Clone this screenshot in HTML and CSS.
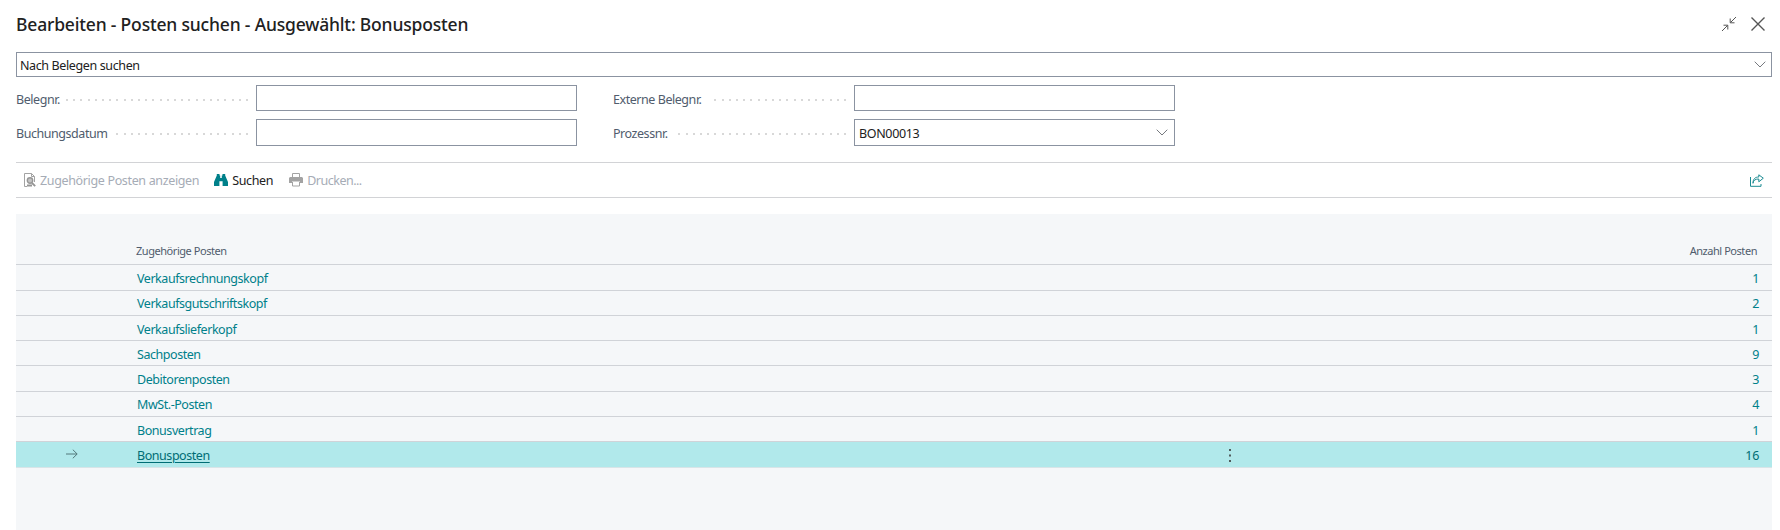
FILE: index.html
```
<!DOCTYPE html>
<html lang="de">
<head>
<meta charset="utf-8">
<title>Posten suchen</title>
<link rel="stylesheet" href="styles.css">
</head>
<body>
<main class="page">
  <header class="titlebar">
    <h1 class="title">Bearbeiten - Posten suchen - Ausgewählt: Bonusposten</h1>
    <svg class="icon-collapse" width="16" height="16" viewBox="0 0 16 16"><path d="M1 15 6.5 9.5M2.5 9.2H6.8V13.5M15 1 9.5 6.5M9.2 2.5V6.8H13.5"/></svg>
    <svg class="icon-close" width="16" height="16" viewBox="0 0 16 16"><path d="M1.5 1.5 14.5 14.5M14.5 1.5 1.5 14.5"/></svg>
  </header>

  <div class="combo">
    <span class="combo-text">Nach Belegen suchen</span>
    <svg class="chevron" width="12" height="7" viewBox="0 0 12 7"><path d="M.7.7 6 6 11.3.7"/></svg>
  </div>

  <form class="fields">
    <div class="field"><label>Belegnr.</label><i class="dots dots-26"></i><div class="box"></div></div>
    <div class="field"><label>Externe Belegnr.</label><i class="dots dots-19"></i><div class="box"></div></div>
    <div class="field"><label>Buchungsdatum</label><i class="dots dots-19"></i><div class="box box-tall"></div></div>
    <div class="field"><label>Prozessnr.</label><i class="dots dots-24"></i><div class="box box-tall"><span class="box-text">BON00013</span><svg class="chevron" width="12" height="7" viewBox="0 0 12 7"><path d="M.7.7 6 6 11.3.7"/></svg></div></div>
  </form>

  <nav class="toolbar">
    <span class="action disabled">
      <svg width="12" height="14" viewBox="0 0 12 14"><path fill="none" stroke="#a3a3a3" d="M3 13.5H.5V.5H7.5L10.5 3.5V9M7.5.5V3.5H10.5"/><circle cx="6" cy="7.5" r="2.7" fill="#c4c4c4" stroke="#969696" stroke-width="1.4"/><path d="M8 10 11.2 13.2M3 12.5H8" stroke="#969696" stroke-width="1.8"/></svg>
      <span class="label">Zugehörige Posten anzeigen</span>
    </span>
    <span class="action action-search">
      <svg width="14" height="12" viewBox="0 0 14 12" fill="#00808a"><path d="M2.8 0H5.5V1.5H6.2V4H7.8V1.5H8.5V0H11.2V1.5L14 8V12H8.6V7.2H5.4V12H0V8L2.8 1.5Z"/></svg>
      <span class="label">Suchen</span>
    </span>
    <span class="action action-print disabled">
      <svg width="14" height="14" viewBox="0 0 14 14"><path fill="none" stroke="#a3a3a3" d="M3.5 4V.5H10.5V4M3.5 9V13H10.5V9"/><path fill="#a3a3a3" d="M1 4H13L14 5V10H11V8.5H3V10H0V5Z"/></svg>
      <span class="label">Drucken...</span>
    </span>
    <svg class="share" width="14" height="13" viewBox="0 0 14 13"><path d="M.5 3V12.3H11V10M3 9.3C3.3 6 5.5 5 8.8 5V7.8L13.3 4.2 8.8.8V3C5 3 3 5 3 9.3Z"/></svg>
  </nav>

  <section class="grid">
    <div class="grid-head"><span>Zugehörige Posten</span><span>Anzahl Posten</span></div>
    <div class="row"><a class="name">Verkaufsrechnungskopf</a><b>1</b></div>
    <div class="row"><a class="name">Verkaufsgutschriftskopf</a><b>2</b></div>
    <div class="row"><a class="name">Verkaufslieferkopf</a><b>1</b></div>
    <div class="row"><a class="name">Sachposten</a><b>9</b></div>
    <div class="row"><a class="name">Debitorenposten</a><b>3</b></div>
    <div class="row"><a class="name">MwSt.-Posten</a><b>4</b></div>
    <div class="row"><a class="name">Bonusvertrag</a><b>1</b></div>
    <div class="row selected">
      <svg class="arrow" width="12" height="10" viewBox="0 0 12 10"><path d="M0 5H11M6.8.7 11.2 5 6.8 9.3"/></svg>
      <a class="name">Bonusposten</a>
      <svg class="more" width="2" height="13" viewBox="0 0 2 13"><path d="M0 0H2V2H0ZM0 5.5H2V7.5H0ZM0 11H2V13H0Z"/></svg>
      <b>16</b>
    </div>
  </section>
</main>
</body>
</html>
```
FILE: styles.css
```
* { box-sizing: border-box; }
body {
  margin: 0;
  background: #fff;
  color: #212121;
  font: 12.5px/18px "Noto Sans", "Open Sans", sans-serif;
  letter-spacing: -0.45px;
}
svg { display: block; flex: none; }
label, span, a { white-space: nowrap; }
.page {
  display: flex;
  flex-direction: column;
  height: 530px;
  padding: 0 8px 0 16px;
  overflow: hidden;
}
.titlebar { display: flex; align-items: flex-start; height: 52px; padding-right: 6px; }
.title { margin: 12px auto 0 0; font-size: 17.5px; line-height: 24px; font-weight: 500; letter-spacing: -0.18px; }
.icon-collapse, .icon-close { margin-top: 16px; fill: none; stroke: #555; }
.icon-close { margin-left: 13px; stroke-width: 1.4; }
.chevron { fill: none; stroke: #76797f; margin-left: auto; }
.combo {
  display: flex;
  align-items: center;
  height: 25px;
  padding: 0 5px 0 3px;
  border: 1px solid #8b93a1;
}
.combo-text { padding-top: 2px; letter-spacing: -0.38px; }
.fields {
  display: grid;
  grid-template-columns: 561px 562px;
  column-gap: 36px;
  grid-template-rows: 34px 43px;
  margin-top: 8px;
}
.field { display: flex; align-items: flex-start; color: #505c6d; }
.field label { margin: 6px auto 0 0; }
.dots {
  height: 2px;
  margin: 14px 8px 0 0;
  background: repeating-linear-gradient(to left, #d8d8d8 0 2px, transparent 2px 7.2px);
}
.dots-26 { width: 183px; }
.dots-24 { width: 168px; }
.dots-19 { width: 132px; }
.box {
  display: flex;
  align-items: center;
  width: 321px;
  height: 26px;
  padding: 0 6px 0 4px;
  border: 1px solid #8b93a1;
  color: #212121;
}
.box-tall { height: 27px; }
.box-text { padding-top: 2px; letter-spacing: -0.35px; }
.toolbar {
  display: flex;
  align-items: center;
  flex: none;
  height: 36px;
  padding: 0 8px;
  border: solid #d2d3d6;
  border-width: 1px 0;
}
.action { display: flex; align-items: center; gap: 4px; color: #212121; letter-spacing: -0.35px; }
.label { padding-top: 2px; }
.action-search { margin-left: 15px; }
.action-print { margin-left: 16px; letter-spacing: -0.5px; }
.disabled { color: #a6acb6; }
.share { margin-left: auto; fill: none; stroke: #1b8b92; }
.grid { flex: 1; margin-top: 16px; background: #f5f7f9; }
.grid-head {
  display: flex;
  align-items: flex-end;
  justify-content: space-between;
  height: 51.4px;
  padding: 0 15px 4px 120px;
  border-bottom: 1px solid #d0d3d8;
  color: #505c6d;
  font-size: 11px;
}
.row {
  display: flex;
  align-items: center;
  height: 25.28px;
  padding: 0 13px 0 121px;
  border-bottom: 1px solid #d0d3d8;
  color: #00808a;
}
.name, .row b { padding-top: 3px; }
.row b { margin-left: auto; font-weight: 400; letter-spacing: -0.3px; }
.selected { padding-left: 50px; background: #b1e9eb; border-bottom-color: #d8e5e8; color: #006d75; }
.selected .name { width: 1092px; margin-left: 59px; text-decoration: underline; text-underline-offset: 2px; }
.arrow { fill: none; stroke: #53787a; }
.more { margin-top: 3px; fill: #505c5d; }
```
